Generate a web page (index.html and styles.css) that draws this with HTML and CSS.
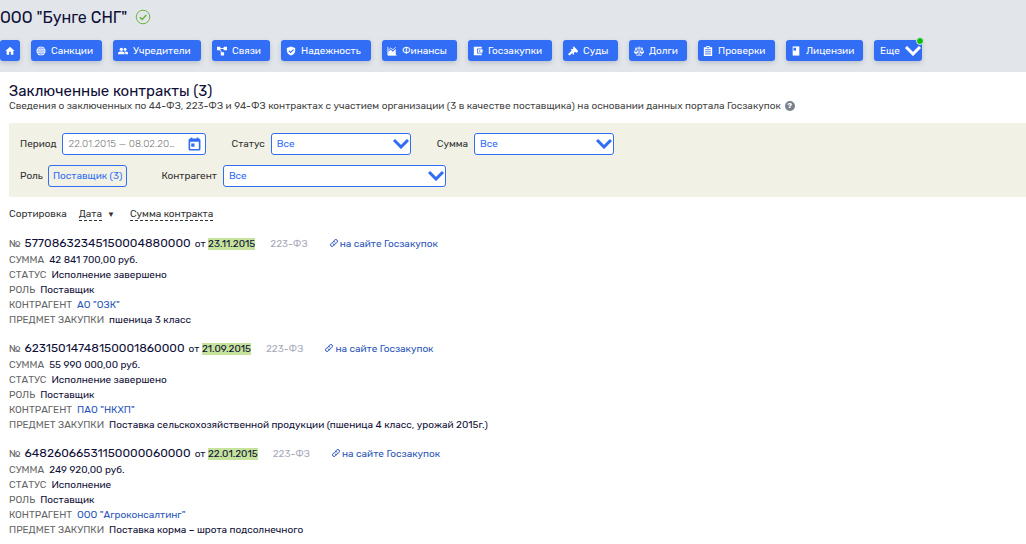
FILE: index.html
```html
<!DOCTYPE html>
<html lang="ru">
<head>
    <meta charset="UTF-8">
    <meta name="viewport" content="width=device-width, initial-scale=1.0">
    <title>ООО "Бунге СНГ" - Заключенные контракты</title>
    <link rel="stylesheet" href="styles.css">
</head>
<body>
    <svg class="sprite">
        <symbol id="link" viewBox="0 0 16 16">
            <g fill="none" stroke="currentColor" stroke-width="2" stroke-linecap="round">
                <path d="M7 4.500L9.500 2a3 3 0 0 1 4.500 4.500L10.500 10a3 3 0 0 1-4.500 0"/>
                <path d="M9 11.500L6.500 14A3 3 0 0 1 2 9.500L5.500 6a3 3 0 0 1 4.500 0"/>
            </g>
        </symbol>
    </svg>
    <header class="header">
        <div class="company">
            <h1>ООО "Бунге СНГ"</h1>
            <svg class="check" viewBox="0 0 16 16" fill="none" stroke="#6db33f">
                <circle cx="8" cy="8" r="6.800"/>
                <path d="M4.800 8.200l2.300 2.200 4.200-4.400" stroke-width="1.500"/>
            </svg>
        </div>
        <nav class="nav">
            <a class="home" href="#" aria-label="Главная"><svg viewBox="0 0 24 24"><path d="M10 21v-7h4v7h6v-9h3L12 2 1 12h3v9z"/></svg></a>
            <a class="w71" href="#"><svg viewBox="0 0 24 24"><circle cx="12" cy="12" r="11"/><path d="M1 12h22M12 1v22M3 6.500h18M3 17.500h18M12 1c-7 6-7 16 0 22M12 1c7 6 7 16 0 22" fill="none" stroke="#326df5" stroke-width="1"/></svg>Санкции</a>
            <a class="w88" href="#"><svg viewBox="0 0 24 24"><circle cx="8" cy="8" r="4"/><path d="M0 20v-3c0-3 5-4 8-4s8 1 8 4v3z"/><circle cx="17" cy="8.500" r="3.500"/><path d="M17.500 20v-3c0-1.500-.7-2.600-1.500-3.500 3-.3 8 .7 8 3.500v3z"/></svg>Учредители</a>
            <a class="w58" href="#"><svg viewBox="0 0 24 24"><path d="M0 2h8v8H0zM16 2h8v8h-8zM9 15h8v8H9z"/><path d="M7 6h10M6 8l7 10" stroke="#fff" stroke-width="2"/></svg>Связи</a>
            <a class="w90" href="#"><svg viewBox="0 0 24 24"><path d="M12 1L2 4.500V11c0 6 4.300 10.600 10 12 5.700-1.400 10-6 10-12V4.500z"/><path d="M7 11.500l4 4 7-7" fill="none" stroke="#326df5" stroke-width="2.800"/></svg>Надежность</a>
            <a class="w75" href="#"><svg viewBox="0 0 24 24"><path d="M3 22V14l6-5 5 5 7-7v15z"/><path d="M2 2v20h21M3 10l6-5 5 4 7-6" fill="none" stroke="#fff" stroke-width="2"/></svg>Финансы</a>
            <a class="w84" href="#"><svg viewBox="0 0 24 24"><path d="M2 2h19v4H10v12h11v4H2z"/><path d="M12 8h11v8H12z"/><circle cx="16" cy="12" r="1.800" fill="#326df5"/></svg>Госзакупки</a>
            <a class="w55" href="#"><svg viewBox="0 0 24 24"><path d="M11 1l4 1 8 8 1 4-4 2-3-2-3 3 1 3-3 1-2-4L4 23l-4-3 8-8 1-1-3-2 2-2 3 1 2-3z"/></svg>Суды</a>
            <a class="w58" href="#"><svg viewBox="0 0 24 24" fill="none" stroke="#fff" stroke-width="2"><path d="M12 1v21M5 22h14M3 5h18M5 5L1 15M5 5l4 10M19 5l-4 10M19 5l4 10" fill="none"/><path d="M1 15c1 4 7 4 8 0zM15 15c1 4 7 4 8 0z" fill="#fff"/></svg>Долги</a>
            <a class="w77" href="#"><svg viewBox="0 0 24 24"><path d="M2 3h6V0h8v3h6v21H2z"/><path d="M9 4h6M5 9h14M5 14h14M5 19h14" stroke="#326df5" stroke-width="2.200"/></svg>Проверки</a>
            <a class="w77" href="#"><svg viewBox="0 0 24 24"><path d="M4 1h16v22H4z"/><path d="M6 4h6v8l-3-2-3 2z" fill="#326df5"/></svg>Лицензии</a>
            <button class="more" type="button">Еще
                <svg class="arrow" viewBox="0 0 16 10" fill="none" stroke="#fff" stroke-width="3"><path d="M1 1l7 7 7-7"/></svg>
                <span class="dot"></span>
            </button>
        </nav>
    </header>
    <main class="main">
        <h2>Заключенные контракты (3)</h2>
        <p class="about">Сведения о заключенных по 44-ФЗ, 223-ФЗ и 94-ФЗ контрактах с участием организации (3 в качестве поставщика) на основании данных портала Госзакупок <span class="help">?</span></p>
        <form class="filter">
            <div class="row">
                <div class="field">
                    <label for="period">Период</label>
                    <div class="period">
                        <input type="text" id="period" value="22.01.2015 — 08.02.2023">
                        <svg viewBox="0 0 24 24"><path d="M5 0h3v2h8V0h3v2h1a3 3 0 0 1 3 3v16a3 3 0 0 1-3 3H4a3 3 0 0 1-3-3V5a3 3 0 0 1 3-3h1zM4 8v13h16V8z" fill-rule="evenodd"/><path d="M6 11h6v6H6z"/></svg>
                    </div>
                </div>
                <div class="field">
                    <label for="status">Статус</label>
                    <select id="status"><option>Все</option></select>
                </div>
                <div class="field">
                    <label for="sum">Сумма</label>
                    <select id="sum"><option>Все</option></select>
                </div>
            </div>
            <div class="row wide">
                <div class="field">
                    <span>Роль</span>
                    <button class="role" type="button">Поставщик (3)</button>
                </div>
                <div class="field">
                    <label for="agent">Контрагент</label>
                    <select id="agent"><option>Все</option></select>
                </div>
            </div>
        </form>
        <div class="sort">
            <span>Сортировка</span>
            <a href="#">Дата</a>
            <span class="down">▼</span>
            <a href="#">Сумма контракта</a>
        </div>
        <article class="item">
            <div class="title">
                <span class="gray">№</span>
                <span class="number">57708632345150004880000</span>
                <span>от <mark>23.11.2015</mark></span>
                <span class="law">223-ФЗ</span>
                <a href="#"><svg><use href="#link"/></svg>на сайте Госзакупок</a>
            </div>
            <dl>
                <div><dt>СУММА</dt><dd>42 841 700,00 руб.</dd></div>
                <div><dt>СТАТУС</dt><dd>Исполнение завершено</dd></div>
                <div><dt>РОЛЬ</dt><dd>Поставщик</dd></div>
                <div><dt>КОНТРАГЕНТ</dt><dd><a href="#">АО "ОЗК"</a></dd></div>
                <div><dt>ПРЕДМЕТ ЗАКУПКИ</dt><dd>пшеница 3 класс</dd></div>
            </dl>
        </article>
        <article class="item">
            <div class="title">
                <span class="gray">№</span>
                <span class="number">62315014748150001860000</span>
                <span>от <mark>21.09.2015</mark></span>
                <span class="law">223-ФЗ</span>
                <a href="#"><svg><use href="#link"/></svg>на сайте Госзакупок</a>
            </div>
            <dl>
                <div><dt>СУММА</dt><dd>55 990 000,00 руб.</dd></div>
                <div><dt>СТАТУС</dt><dd>Исполнение завершено</dd></div>
                <div><dt>РОЛЬ</dt><dd>Поставщик</dd></div>
                <div><dt>КОНТРАГЕНТ</dt><dd><a href="#">ПАО "НКХП"</a></dd></div>
                <div><dt>ПРЕДМЕТ ЗАКУПКИ</dt><dd>Поставка сельскохозяйственной продукции (пшеница 4 класс, урожай 2015г.)</dd></div>
            </dl>
        </article>
        <article class="item">
            <div class="title">
                <span class="gray">№</span>
                <span class="number">64826066531150000060000</span>
                <span>от <mark>22.01.2015</mark></span>
                <span class="law">223-ФЗ</span>
                <a href="#"><svg><use href="#link"/></svg>на сайте Госзакупок</a>
            </div>
            <dl>
                <div><dt>СУММА</dt><dd>249 920,00 руб.</dd></div>
                <div><dt>СТАТУС</dt><dd>Исполнение</dd></div>
                <div><dt>РОЛЬ</dt><dd>Поставщик</dd></div>
                <div><dt>КОНТРАГЕНТ</dt><dd><a href="#">ООО "Агроконсалтинг"</a></dd></div>
                <div><dt>ПРЕДМЕТ ЗАКУПКИ</dt><dd>Поставка корма – шрота подсолнечного</dd></div>
            </dl>
        </article>
    </main>
</body>
</html>
```
FILE: styles.css
```css
*{
    box-sizing: border-box;
}
body{
    margin: 0;
    font-family: Rubik, Roboto, sans-serif;
    font-size: 10px;
    line-height: 15px;
    color: #0f0f37;
    background: #fff;
}
h1,h2,p,dl,dd{
    margin: 0;
}
h1,h2{
    font-weight: 400;
}
a{
    color: #2a56b9;
    text-decoration: none;
}
input,select,button{
    font: inherit;
}
.sprite{
    display: none;
}
.header{
    background: #e2e6ea;
    padding: 7px 0 11px;
}
.company{
    display: flex;
    align-items: center;
    gap: 8px;
    height: 20px;
}
h1{
    padding-top: 2px;
    font-size: 16px;
    line-height: 20px;
}
.check{
    width: 16px;
    height: 16px;
}
.nav{
    display: flex;
    gap: 11px;
    margin-top: 13px;
}
.nav a,.more{
    display: flex;
    align-items: center;
    height: 21px;
    padding: 1px 5px 0;
    gap: 5px;
    border: 0;
    border-radius: 3px;
    color: #fff;
    background: #326df5;
    box-shadow: 0 2px 5px #b9c0cc;
    white-space: nowrap;
}
.nav svg{
    width: 10px;
    height: 10px;
    fill: #fff;
    flex: none;
}
.nav .home{
    width: 20px;
}
.nav .w55{
    width: 55px;
}
.nav .w58{
    width: 58px;
}
.nav .w71{
    width: 71px;
}
.nav .w75{
    width: 75px;
}
.nav .w77{
    width: 77px;
}
.nav .w84{
    width: 84px;
}
.nav .w88{
    width: 88px;
}
.nav .w90{
    width: 90px;
}
.more{
    position: relative;
    justify-content: space-between;
    width: 48px;
    padding: 1px 1px 0 6px;
}
.nav .arrow{
    width: 16px;
    height: 10px;
    fill: none;
}
.dot{
    position: absolute;
    top: -3px;
    right: -2px;
    width: 8px;
    height: 8px;
    border: 1px solid #e2e6ea;
    border-radius: 50%;
    background: #0abf0a;
}
.main{
    padding: 10px 0 0 9px;
}
h2{
    font-size: 15px;
    line-height: 18px;
}
.about{
    display: flex;
    align-items: center;
    gap: 4px;
    line-height: 12px;
    color: #444;
}
.help{
    width: 10px;
    height: 10px;
    border-radius: 50%;
    background: #7a818c;
    color: #fff;
    font-size: 8px;
    line-height: 10px;
    font-weight: 700;
    text-align: center;
}
.filter{
    display: flex;
    flex-direction: column;
    gap: 10px;
    margin-top: 11px;
    padding: 10px 11px;
    background: #f1f1e6;
    color: #333;
}
.row{
    display: flex;
    gap: 26px;
}
.wide{
    gap: 34px;
}
.field{
    display: flex;
    align-items: center;
    gap: 5px;
}
.field + .field{
    gap: 6px;
}
.period{
    display: flex;
    align-items: center;
    width: 144px;
    height: 22px;
    padding: 0 4px 0 6px;
    border: 1px solid #326df5;
    border-radius: 3px;
    background: #fff;
}
.period input{
    flex: 1;
    min-width: 0;
    margin-right: 10px;
    padding: 1px 0 0;
    border: 0;
    outline: 0;
    color: #777;
    background: none;
    font-weight: 300;
    text-overflow: ellipsis;
}
.period svg{
    width: 13px;
    height: 14px;
    fill: #326df5;
}
select{
    width: 140px;
    height: 22px;
    padding: 1px 5px 0;
    border: 1px solid #326df5;
    border-radius: 3px;
    color: #326df5;
    background: #fff url("data:image/svg+xml,%3Csvg xmlns='http://www.w3.org/2000/svg' width='16' height='10' fill='none' stroke='%23326df5' stroke-width='3'%3E%3Cpath d='M1 1l7 7 7-7'/%3E%3C/svg%3E") no-repeat right 1px center;
    appearance: none;
}
.wide select{
    width: 223px;
}
.role{
    height: 22px;
    padding: 1px 4px 0;
    border: 1px solid #326df5;
    border-radius: 3px;
    color: #326df5;
    background: none;
}
.sort{
    display: flex;
    margin: 10px 0 12px;
    color: #333;
}
.sort a{
    height: 14px;
    margin-left: 12px;
    color: #333;
    border-bottom: 1px dashed #333;
}
.down{
    margin: 0 3px 0 5px;
    font-size: 8px;
}
.item{
    margin-bottom: 11px;
}
.title{
    display: flex;
    align-items: baseline;
    gap: 4px;
    height: 19px;
    line-height: 18px;
}
.gray,dt{
    color: #666;
}
.number{
    font-size: 12px;
}
mark{
    color: inherit;
    background: #c5e39b;
}
.law{
    margin: 0 18px 0 11px;
    color: #a9a9bb;
}
.title svg{
    width: 8px;
    height: 8px;
    margin-right: 2px;
}
dl div{
    display: flex;
    gap: 5px;
}
```
